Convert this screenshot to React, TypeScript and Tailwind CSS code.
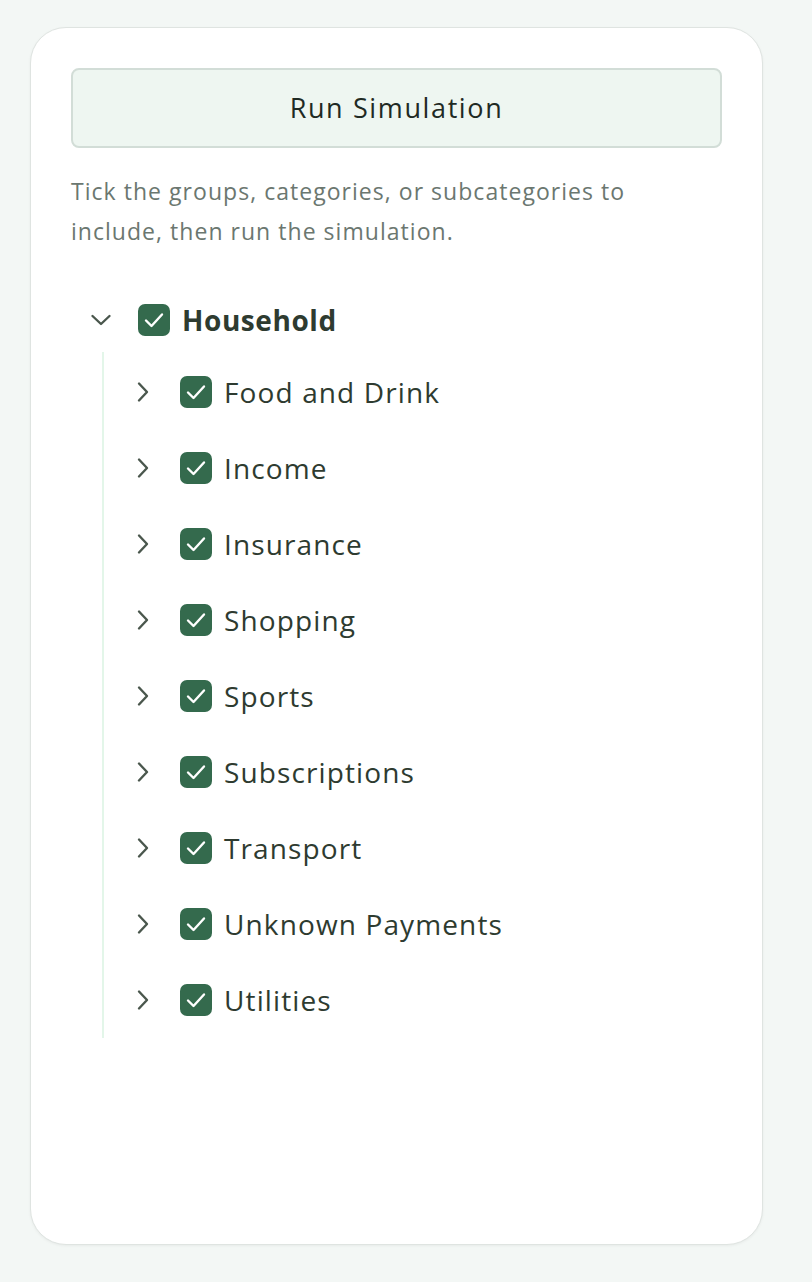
import React from "react";

const categories = [
  "Food and Drink",
  "Income",
  "Insurance",
  "Shopping",
  "Sports",
  "Subscriptions",
  "Transport",
  "Unknown Payments",
  "Utilities",
];

const Chevron = ({ down = false }: { down?: boolean }) => (
  <svg
    viewBox="0 0 24 24"
    className={down ? "h-6 w-6 rotate-90" : "h-6 w-6"}
    fill="none"
    stroke="#4a574d"
    strokeWidth={2.4}
    strokeLinecap="round"
    strokeLinejoin="round"
  >
    <path d="M8 3.5 L16 12 L8 20.5" />
  </svg>
);

const Check = () => (
  <span className="grid h-8 w-8 shrink-0 place-items-center rounded-[7px] bg-[#346a4d]">
    <svg viewBox="0 0 32 32" className="h-8 w-8" fill="none" stroke="#fff" strokeWidth={2.4} strokeLinecap="round" strokeLinejoin="round">
      <path d="M8 16.5 13.5 22 24 10.5" />
    </svg>
  </span>
);

export default function App() {
  return (
    <div className="min-h-screen bg-[#f3f7f5] px-[30px] pt-[27px] font-['Open_Sans',sans-serif]">
      <div className="h-[1218px] w-[733px] rounded-[36px] border border-[#dfe4e1] bg-white px-[40px] pt-[40px] shadow-[0_1px_3px_rgba(0,0,0,0.05)]">
        {/* run button */}
        <button
          type="button"
          className="flex h-[80px] w-full items-center justify-center rounded-[8px] border-2 border-[#d2ddd7] bg-[#eef6f1] text-[27px] font-medium tracking-[0.06em] text-[#1f2a24]"
        >
          Run Simulation
        </button>

        <p className="mt-[23px] max-w-[645px] text-[23px] leading-[40px] tracking-[0.045em] text-[#6b7770]">
          Tick the groups, categories, or subcategories to include, then run the simulation.
        </p>

        {/* tree */}
        <div className="mt-[37px] pl-[15px] text-[28px] text-[#2e3b30]">
          <div className="flex h-[64px] items-center">
            <span className="flex w-[30px] justify-center">
              <Chevron down />
            </span>
            <span className="ml-[22px]">
              <Check />
            </span>
            <span className="ml-[12px] font-bold tracking-[0.02em]">Household</span>
          </div>

          <div className="ml-[16px] border-l-2 border-[#e3f6e9] pl-[24px] pt-[2px]">
            {categories.map((c) => (
              <div key={c} className="flex h-[76px] items-center">
                <span className="flex w-[30px] justify-center">
                  <Chevron />
                </span>
                <span className="ml-[22px]">
                  <Check />
                </span>
                <span className="ml-[12px] tracking-[0.04em]">{c}</span>
              </div>
            ))}
          </div>
        </div>
      </div>
    </div>
  );
}
